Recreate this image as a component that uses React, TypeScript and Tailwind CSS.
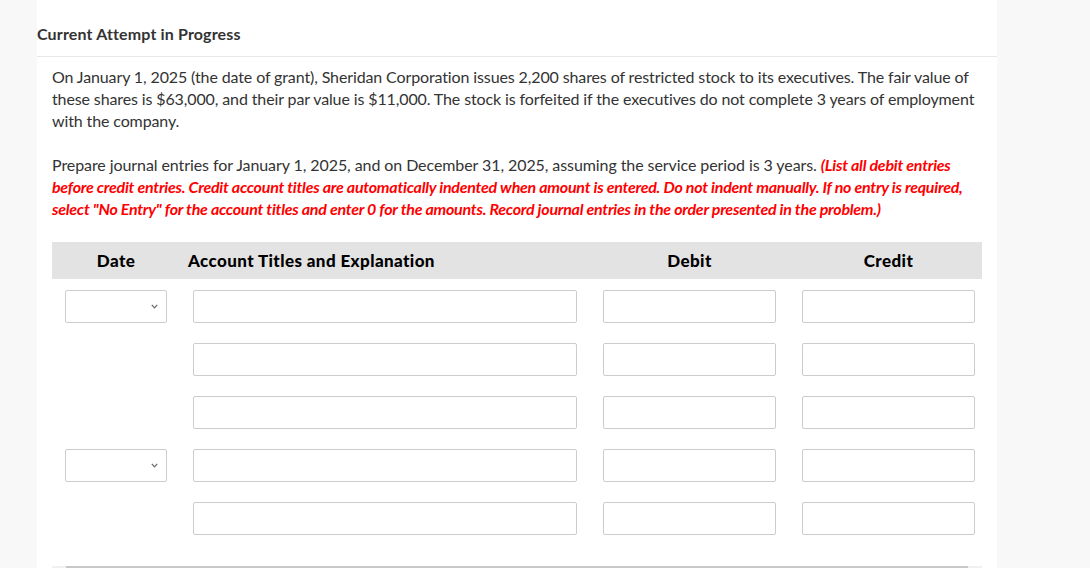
import React from "react";

function Field({ w }: { w: string }) {
	return <div className={`${w} h-[33px] border border-[#cccccc] rounded-[2px] bg-white`} />;
}

function DateSelect() {
	return (
		<div className="w-[102px] h-[33px] border border-[#cccccc] rounded-[2px] bg-white relative">
			<svg className="absolute right-[8px] top-[13px]" width="7" height="5" viewBox="0 0 7 5">
				<path d="M0.8 0.8 L3.5 3.8 L6.2 0.8" fill="none" stroke="#666" strokeWidth="1.2" />
			</svg>
		</div>
	);
}

function Row({ date }: { date: boolean }) {
	return (
		<div className="grid grid-cols-[102px_384px_173px_173px] gap-x-[26px] pl-[13px] pr-[7px]">
			{date ? <DateSelect /> : <div />}
			<Field w="w-[384px]" />
			<Field w="w-[173px]" />
			<Field w="w-[173px]" />
		</div>
	);
}

export default function App() {
	const rows = [true, false, false, true, false];
	return (
		<div className="w-[1090px] h-[568px] overflow-hidden bg-[#f8f8f8]" style={{ fontFamily: "Lato, 'Open Sans', sans-serif" }}>
			<div className="ml-[37px] w-[960px] h-full bg-white text-[#333333]">
				{/* Titulo */}
				<div className="pt-[23px] pb-[11px] border-b border-[#e8e8e8]">
					<h2 className="text-[16px] font-bold leading-[22px] tracking-[0.15px] text-[#333333]">Current Attempt in Progress</h2>
				</div>

				<div className="px-[15px] pt-[9px] text-[16px] leading-[22px]">
					<p className="tracking-[-0.12px]">
						On January 1, 2025 (the date of grant), Sheridan Corporation issues 2,200 shares of restricted stock to its executives. The fair value of
						these shares is $63,000, and their par value is $11,000. The stock is forfeited if the executives do not complete 3 years of employment
						with the company.
					</p>
					<p className="mt-[22px] tracking-[-0.08px]">
						Prepare journal entries for January 1, 2025, and on December 31, 2025, assuming the service period is 3 years.{" "}
						<em className="text-[#ff0000] font-bold tracking-[-0.25px]">
							(List all debit entries before credit entries. Credit account titles are automatically indented when amount is entered. Do not indent
							manually. If no entry is required, select "No Entry" for the account titles and enter 0 for the amounts. Record journal entries in the
							order presented in the problem.)
						</em>
					</p>

					{/* Tabela */}
					<div className="mt-[22px] w-[930px]">
						<div className="h-[37px] bg-[#e3e3e3] grid grid-cols-[102px_384px_173px_173px] gap-x-[26px] pl-[13px] pr-[7px] items-center text-black font-black text-[17px] tracking-[0.4px]">
							<div className="text-center">Date</div>
							<div className="-ml-[5px]">Account Titles and Explanation</div>
							<div className="text-center">Debit</div>
							<div className="text-center">Credit</div>
						</div>
						<div className="flex flex-col gap-[20px] pt-[11px]">
							{rows.map((d, i) => (
								<Row key={i} date={d} />
							))}
						</div>
						<div className="mt-[31px] h-[3px] bg-[#f0f0f0] px-[14px]">
							<div className="h-full bg-[#c8c8c8]" />
						</div>
					</div>
				</div>
			</div>
		</div>
	);
}
